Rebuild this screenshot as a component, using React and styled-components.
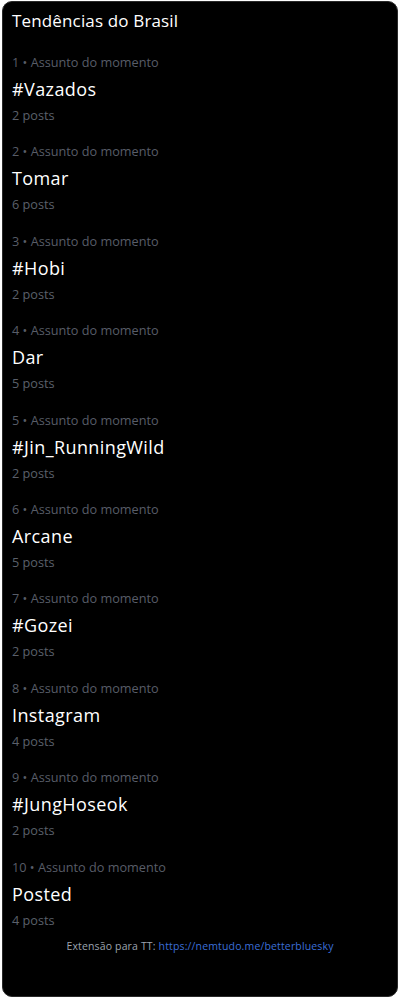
import React from "react";
import styled, { createGlobalStyle } from "styled-components";

const Global = createGlobalStyle`
  body {
    margin: 0;
    background: #ffffff;
    font-family: "Open Sans", "Liberation Sans", sans-serif;
  }
`;

const Page = styled.div`
  padding: 1px 2px 2px 2px;
`;

const Card = styled.div`
  background: #000000;
  border: 1px solid #2a2a2a;
  border-radius: 10px;
  height: 996px;
  box-sizing: border-box;
  padding: 9px 9px 0 9px;
  display: flex;
  flex-direction: column;
`;

const Title = styled.h2`
  margin: 0 0 22px 0;
  font-size: 17px;
  font-weight: 400;
  line-height: 20px;
  letter-spacing: 0.15px;
  color: #ffffff;
`;

const List = styled.div`
  display: flex;
  flex-direction: column;
  gap: 18.4px;
`;

const Item = styled.div`
  display: flex;
  flex-direction: column;
`;

const Rank = styled.span`
  font-size: 12.7px;
  line-height: 18px;
  color: #585d68;
`;

const Name = styled.span`
  margin-top: 8px;
  font-size: 18px;
  line-height: 20px;
  letter-spacing: 0.4px;
  color: #ffffff;
`;

const Count = styled.span`
  margin-top: 7px;
  font-size: 12.7px;
  line-height: 18px;
  color: #5b606b;
`;

const Footer = styled.div`
  margin-top: 10px;
  text-align: center;
  font-size: 10.5px;
  letter-spacing: 0.15px;
  color: #9ca3af;
`;

const Link = styled.a`
  color: #3b6fd8;
  text-decoration: none;
`;

const trends = [
  ["#Vazados", 2],
  ["Tomar", 6],
  ["#Hobi", 2],
  ["Dar", 5],
  ["#Jin_RunningWild", 2],
  ["Arcane", 5],
  ["#Gozei", 2],
  ["Instagram", 4],
  ["#JungHoseok", 2],
  ["Posted", 4],
];

export default function App() {
  return (
    <Page>
      <Global />
      <Card>
        <Title>Tendências do Brasil</Title>
        <List>
          {trends.map(([name, n], i) => (
            <Item key={name}>
              <Rank>{i + 1} • Assunto do momento</Rank>
              <Name>{name}</Name>
              <Count>{n} posts</Count>
            </Item>
          ))}
        </List>
        <Footer>
          Extensão para TT: <Link href="#">https://nemtudo.me/betterbluesky</Link>
        </Footer>
      </Card>
    </Page>
  );
}
